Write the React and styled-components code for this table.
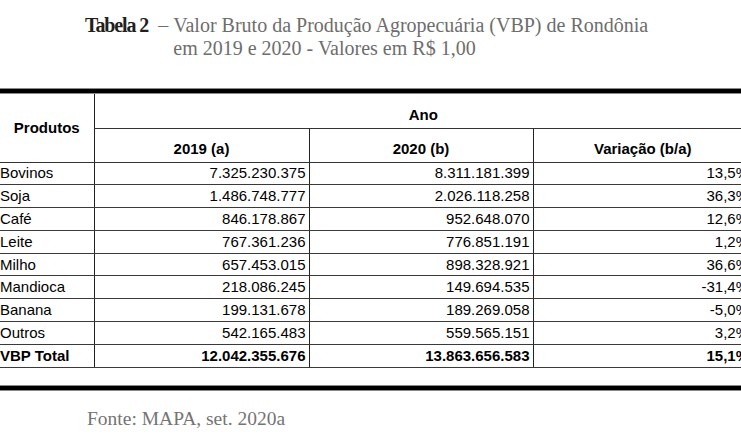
import React from "react";
import styled, { createGlobalStyle } from "styled-components";

const GlobalStyle = createGlobalStyle`
  html, body {
    margin: 0;
    padding: 0;
    background: #fff;
  }
  body {
    width: 741px;
    height: 445px;
    overflow: hidden;
  }
`;

const Page = styled.div`
  width: 741px;
  height: 445px;
  overflow: hidden;
  padding-top: 14px;
  box-sizing: border-box;
`;

const Caption = styled.div`
  display: flex;
  margin-left: 85px;
  font-family: "Liberation Serif", "DejaVu Serif", serif;
  font-size: 20px;
  line-height: 23px;
  color: #6d6d6d;
`;

const Label = styled.span`
  white-space: pre;
  b {
    color: #231f20;
    letter-spacing: -1.1px;
  }
`;

const CaptionText = styled.div``;

const Rule = styled.div`
  width: 760px;
  height: 4px;
  background: #000;
  border-top: 1px solid #8a8a8a;
  border-bottom: 1px solid #8a8a8a;
  margin-top: ${(p) => p.$top}px;
`;

const Table = styled.table`
  width: 752px;
  table-layout: fixed;
  border-collapse: collapse;
  font-family: "Liberation Sans", Arial, sans-serif;
  font-size: 15px;
  color: #000;
`;

const HeadRow = styled.tr`
  height: 34px;
`;

const HeadCell = styled.th`
  padding: 0 0 ${(p) => (p.$middle ? 0 : 4)}px;
  line-height: 18px;
  vertical-align: ${(p) => (p.$middle ? "middle" : "bottom")};
  text-align: center;
  font-weight: bold;
  border-left: ${(p) => (p.$first ? "none" : "1px solid #222")};
  border-bottom: 1px solid #333;
`;

const Row = styled.tr`
  height: 22.8px;
  font-weight: ${(p) => (p.$total ? "bold" : "normal")};
`;

const Cell = styled.td`
  padding: 0 ${(p) => (p.$left ? 0 : 3)}px 0 ${(p) => (p.$left ? 0 : 3)}px;
  text-align: ${(p) => (p.$left ? "left" : "right")};
  white-space: nowrap;
  line-height: 18px;
  border-left: ${(p) => (p.$left ? "none" : "1px solid #222")};
  border-bottom: 1px solid #3a3a3a;
`;

const Source = styled.div`
  margin: 16px 0 0 87px;
  font-family: "Liberation Serif", "DejaVu Serif", serif;
  font-size: 19.5px;
  line-height: 23px;
  color: #747474;
`;

const rows = [
  ["Bovinos", "7.325.230.375", "8.311.181.399", "13,5%"],
  ["Soja", "1.486.748.777", "2.026.118.258", "36,3%"],
  ["Café", "846.178.867", "952.648.070", "12,6%"],
  ["Leite", "767.361.236", "776.851.191", "1,2%"],
  ["Milho", "657.453.015", "898.328.921", "36,6%"],
  ["Mandioca", "218.086.245", "149.694.535", "-31,4%"],
  ["Banana", "199.131.678", "189.269.058", "-5,0%"],
  ["Outros", "542.165.483", "559.565.151", "3,2%"],
];

const total = ["VBP Total", "12.042.355.676", "13.863.656.583", "15,1%"];

const App = () => {
  return (
    <Page>
      <GlobalStyle />
      <Caption>
        <Label>
          <b>Tabela 2</b>  –{" "}
        </Label>
        <CaptionText>
          Valor Bruto da Produção Agropecuária (VBP) de Rondônia
          <br />
          em 2019 e 2020 - Valores em R$ 1,00
        </CaptionText>
      </Caption>

      <Rule $top={28} />
      <Table>
        <colgroup>
          <col style={{ width: 94 }} />
          <col style={{ width: 215 }} />
          <col style={{ width: 224 }} />
          <col style={{ width: 219 }} />
        </colgroup>
        <thead>
          <HeadRow>
            <HeadCell rowSpan={2} $first $middle>
              Produtos
            </HeadCell>
            <HeadCell colSpan={3}>Ano</HeadCell>
          </HeadRow>
          <HeadRow>
            <HeadCell>2019 (a)</HeadCell>
            <HeadCell>2020 (b)</HeadCell>
            <HeadCell>Variação (b/a)</HeadCell>
          </HeadRow>
        </thead>
        <tbody>
          {rows.map((r) => (
            <Row key={r[0]}>
              <Cell $left>{r[0]}</Cell>
              <Cell>{r[1]}</Cell>
              <Cell>{r[2]}</Cell>
              <Cell>{r[3]}</Cell>
            </Row>
          ))}
          <Row $total>
            <Cell $left>{total[0]}</Cell>
            <Cell>{total[1]}</Cell>
            <Cell>{total[2]}</Cell>
            <Cell>{total[3]}</Cell>
          </Row>
        </tbody>
      </Table>
      <Rule $top={17} />

      <Source>Fonte: MAPA, set. 2020a</Source>
    </Page>
  );
};

export default App;
